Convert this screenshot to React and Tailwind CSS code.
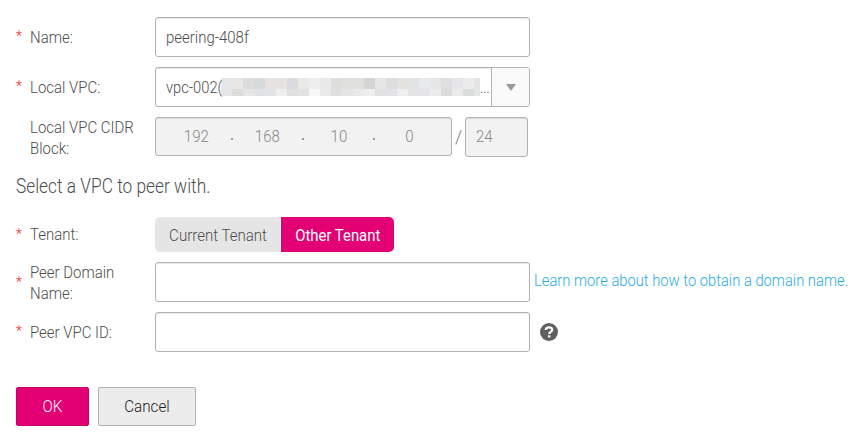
const mosaicTop = [
  '#e5e7e8', '#e8e7e6', '#dcdcda', '#d8dadd', '#e4e3e1', '#e4e3e2', '#d9dbdf', '#e9e9e9', '#eeeeee', '#e8eae9', '#dddddc', '#e0e0de',
  '#e0e0df', '#d4d4d4', '#e6e6e6', '#dddddd', '#e3e2df', '#e2e4e3', '#e7e9ec', '#e7e6e4', '#dfdfdf', '#e4e5e8', '#ececec', '#e2e4e6',
];
const mosaicBottom = [
  '#e3e5e7', '#dcdcda', '#e6e6e5', '#e1e2e6', '#e2e3e5', '#f0efed', '#dfe0e2', '#e1e1e1', '#f6f8f7', '#e9ebea', '#e0e0df', '#e5e5e6',
  '#e9e9ec', '#eeeeee', '#e2e0e0', '#e1e3e6', '#eeeeee', '#e5e4e2', '#e4e5e9', '#ececec', '#dcdcda', '#eaeaea', '#dbdddc', '#e2e4e6',
];

function MosaicRow({ colors, className }) {
  return (
    <div className={`flex overflow-hidden ${className}`}>
      {colors.map((c, i) => (
        <span key={i} className="w-[11px] shrink-0" style={{ backgroundColor: c }} />
      ))}
    </div>
  );
}

// Condensed text, anchored at its left edge unless told otherwise
function T({ children, className = 'origin-left scale-x-[0.935]' }) {
  return <span className={`inline-block scale-y-[1.04] whitespace-nowrap ${className}`}>{children}</span>;
}

function Label({ children, required = true, starClass = 'pb-[3px]', textClass = 'pt-[2px]' }) {
  return (
    <div className="flex w-[139px] shrink-0 items-center">
      <span className={`w-[14px] text-[14px] font-light leading-5 text-[#ff1a1a] ${starClass}`}>{required ? '*' : ''}</span>
      <span className={`w-[125px] leading-5 ${textClass}`}><T>{children}</T></span>
    </div>
  );
}

const field = 'shrink-0 rounded-[3px] border border-[#b2b2b2] shadow-[inset_0_1px_1px_rgba(0,0,0,0.1)]';
const centered = 'origin-center scale-x-[0.94]';

function Octet({ children }) {
  return <span className="w-[71px] pt-px text-center"><T className={centered}>{children}</T></span>;
}

function Dot() {
  return <span className="flex w-0 justify-center"><span className="mt-[5px] h-[2px] w-[2px] shrink-0 bg-[#999]" /></span>;
}

export default function App() {
  return (
    <main className="h-[438px] w-[864px] overflow-hidden bg-white pt-[17px] pl-4 font-['Roboto','Liberation_Sans',sans-serif] text-[16px] font-light text-[#4d4d4d]">
      <div className="flex flex-col gap-[10px]">
        <div className="flex h-10 items-center">
          <Label>Name:</Label>
          <div className={`flex h-10 w-[375px] items-center bg-white pt-px pl-[10px] ${field}`}>
            <T>peering-408f</T>
          </div>
        </div>
        <div className="flex h-10 items-center">
          <Label>Local VPC:</Label>
          <div className={`flex h-10 w-[375px] items-center bg-white pl-[10px] ${field}`}>
            <span className="w-[55px] shrink-0 pt-px whitespace-nowrap"><T className="origin-left scale-x-[0.92]">vpc-002(</T></span>
            <span className="w-[259px] shrink-0">
              <MosaicRow colors={mosaicTop} className="h-[11px]" />
              <MosaicRow colors={mosaicBottom} className="h-[7px]" />
            </span>
            <span className="w-[11px] shrink-0 pt-px"><T className="origin-left scale-x-[0.85]">...</T></span>
            <span className="flex h-full flex-1 items-center justify-center rounded-r-[2px] border-l border-[#b2b2b2] bg-[#fafafa]">
              <span className="h-0 w-0 border-x-[5px] border-t-[7px] border-x-transparent border-t-[#999]" />
            </span>
          </div>
        </div>
        <div className="flex h-10 items-start">
          <div className="flex h-10 items-center">
            <Label required={false}>Local VPC CIDR<br />Block:</Label>
          </div>
          <div className={`flex h-[39px] w-[297px] items-center bg-[#f2f2f2] pl-[5px] text-[#888] ${field}`}>
            <Octet>192</Octet>
            <Dot />
            <Octet>168</Octet>
            <Dot />
            <Octet>10</Octet>
            <Dot />
            <Octet>0</Octet>
          </div>
          <span className="w-[13px] text-center text-[18px] leading-10 text-[#777]">/</span>
          <div className={`flex h-10 w-[63px] items-center bg-[#f2f2f2] pl-[10px] text-[#888] ${field}`}>
            <T>24</T>
          </div>
        </div>
      </div>

      <h2 className="mt-[15px] h-[30px] text-[19px] leading-[29px]">
        <T className="origin-left scale-x-[0.912]">Select a VPC to peer with.</T>
      </h2>

      <div className="mt-[15px] flex h-[35px] items-center">
        <Label textClass="pb-0" starClass="pb-[2px]">Tenant:</Label>
        <div className="flex h-[35px] gap-px">
          <button className="flex w-[125px] items-center justify-center rounded-l-[5px] bg-[#e5e5e5] pt-[2px]"><T className={centered}>Current Tenant</T></button>
          <button className="flex w-[113px] items-center justify-center rounded-r-[5px] bg-[#e20074] pt-[2px] font-normal text-white"><T className="origin-center scale-x-[0.93]">Other Tenant</T></button>
        </div>
      </div>

      <div className="mt-[10px] flex flex-col gap-[10px]">
        <div className="flex h-10 items-center">
          <Label starClass="pb-[1px]">Peer Domain<br />Name:</Label>
          <div className={`h-10 w-[375px] ${field}`} />
          <a className="ml-[3.5px] pb-[3px] text-[#2aace6]"><T className="origin-left scale-x-[0.922]">Learn more about how to obtain a domain name.</T></a>
        </div>
        <div className="flex h-10 items-center">
          <Label>Peer VPC ID:</Label>
          <div className={`h-10 w-[375px] ${field}`} />
          <svg className="ml-[10px] h-[18px] w-[18px]" viewBox="0 0 18 18" fill="none">
            <circle cx="9" cy="9" r="9" fill="#606060" />
            <path d="M5.7 7Q5.9 4.3 9 4.3Q12.2 4.3 12.2 6.8Q12.2 8 10.6 8.9Q9.2 9.6 9.2 11" stroke="white" strokeWidth="2.2" />
            <path d="M8 12.3h2.3v2.2H8z" fill="white" />
          </svg>
        </div>
      </div>

      <div className="mt-[35px] flex gap-[9px]">
        <button className="h-[39px] w-[73px] rounded-[2px] border border-[#c90068] bg-[#e20074] text-white"><T className="origin-center scale-x-[0.95]">OK</T></button>
        <button className="h-[39px] w-[98px] rounded-[2px] border border-[#b2b2b2] bg-[#ececec] text-[#222]"><T className="origin-center scale-x-[0.95]">Cancel</T></button>
      </div>
    </main>
  );
}
